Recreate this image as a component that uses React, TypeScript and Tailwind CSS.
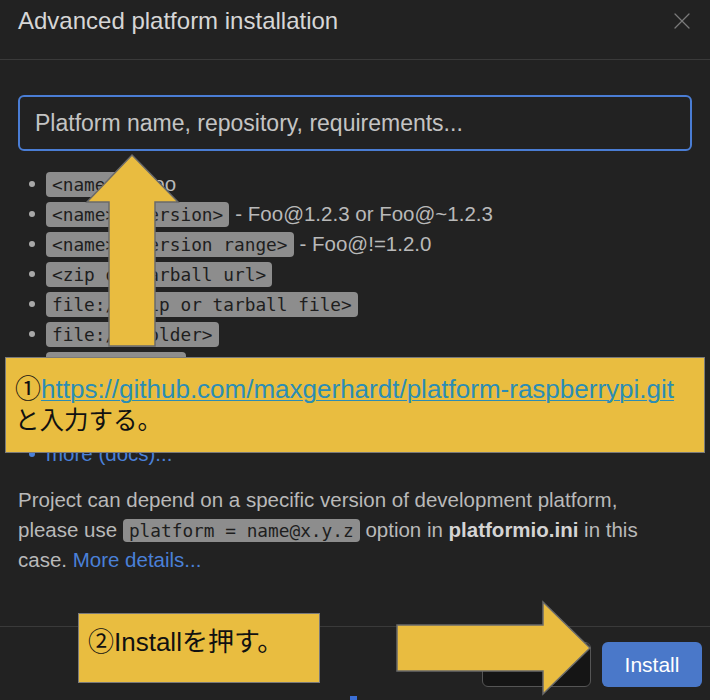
import { X } from "lucide-react";

const items: { code: string; note?: string }[] = [
  { code: "<name>", note: "Foo" },
  { code: "<name>@<version>", note: "Foo@1.2.3 or Foo@~1.2.3" },
  { code: "<name>@<version range>", note: "Foo@!=1.2.0" },
  { code: "<zip or tarball url>" },
  { code: "file://<zip or tarball file>" },
  { code: "file://<folder>" },
  { code: "<repository>" },
  { code: "<name>=<repository>", note: "name it should have locally" },
  { code: "<repository#tag>", note: "\"tag\" can be commit, branch or tag" },
];

const chip =
  "rounded-[4px] bg-[#8d8d8d] px-[6px] py-[1px] font-['DejaVu_Sans_Mono','Liberation_Mono',monospace] text-[17.8px] leading-[23px] text-[#1e1e1e]";

function Annotations() {
  return (
    <>
      <svg className="pointer-events-none absolute left-0 top-0" width="710" height="700" viewBox="0 0 710 700">
        <polygon
          points="132,155 178,202 155,202 155,346 109,346 109,202 87,202"
          fill="#e9bc40"
          stroke="#6a6a6a"
          strokeWidth="1.5"
        />
        <polygon
          points="397,625 543,625 543,602 590,648 543,694 543,671 397,671"
          fill="#e9bc40"
          stroke="#6a6a6a"
          strokeWidth="1.5"
        />
      </svg>

      <div className="absolute left-[5px] top-[357px] h-[96px] w-[700px] border border-[#7a7a7a] bg-[#e9bd40] pl-[9px] pt-[15px] font-['Liberation_Sans','Noto_Sans_CJK_JP',sans-serif] leading-[32px] text-[#111]">
        <div className="whitespace-nowrap text-[26px]">
          ①<span className="text-[#2b8db5] underline decoration-1 underline-offset-2">
            https://github.com/maxgerhardt/platform-raspberrypi.git
          </span>
        </div>
        <div className="text-[24.5px]">と入力する。</div>
      </div>

      <div className="absolute left-[78px] top-[613px] h-[70px] w-[242px] border border-[#7a7a7a] bg-[#e9bd40] pl-[9px] pt-[12px] font-['Liberation_Sans','Noto_Sans_CJK_JP',sans-serif] text-[26px] leading-[32px] text-[#111]">
        ②Installを押す。
      </div>

      <div className="absolute left-[350px] top-[696px] h-[4px] w-[7px] bg-[#3b6fd6]" />
    </>
  );
}

export default function App() {
  return (
    <div className="relative flex h-[700px] w-[710px] flex-col overflow-hidden bg-[#222222] font-['Liberation_Sans',sans-serif]">
      <header className="flex h-[60px] shrink-0 items-start justify-between border-b border-[#3a3a3a] px-[18px] pt-[7px]">
        <h1 className="text-[24px] leading-[28px] text-[#d6d6d6]">Advanced platform installation</h1>
        <X className="mr-[-4px] mt-[0px] h-[28px] w-[28px] text-[#7a7a7a]" strokeWidth={1.1} />
      </header>

      <main className="flex-1 px-[18px] pt-[35px]">
        <div className="flex h-[56px] items-center rounded-[6px] border-2 border-[#4a7dd4] px-[15px] text-[23px] text-[#c4c4c4]">
          Platform name, repository, requirements...
        </div>

        <ul className="mt-[18px]">
          {items.map((it) => (
            <li key={it.code} className="flex h-[30px] items-center whitespace-nowrap text-[20.5px] text-[#b9b9b9]">
              <span className="ml-[11px] mr-[11px] h-[6px] w-[6px] shrink-0 rounded-full bg-[#a8a8a8]" />
              <span className={chip}>{it.code}</span>
              {it.note && <span className="ml-[6px]">- {it.note}</span>}
            </li>
          ))}
          <li className="flex h-[30px] items-center text-[20.5px]">
            <span className="ml-[11px] mr-[11px] h-[6px] w-[6px] rounded-full bg-[#4a80d8]" />
            <span className="text-[#4a80d8]">more (docs)...</span>
          </li>
        </ul>

        <p className="mt-[16px] w-[650px] text-[20.5px] leading-[30px] text-[#b9b9b9]">
          Project can depend on a specific version of development platform, please use{" "}
          <span className={chip}>platform = name@x.y.z</span> option in{" "}
          <b className="text-[#d4d4d4]">platformio.ini</b> in this case.{" "}
          <span className="text-[#4a80d8]">More details...</span>
        </p>
      </main>

      <footer className="flex h-[74px] shrink-0 items-start justify-end gap-[11px] border-t border-[#3a3a3a] pr-[8px] pt-[15px]">
        <button className="flex h-[45px] w-[109px] items-start justify-center rounded-[6px] border border-[#555] bg-[#151515] pt-[6px] text-[18px] leading-[20px] text-[#ddd]">
          Cancel
        </button>
        <button className="h-[45px] w-[100px] rounded-[6px] bg-[#4a78c9] text-[21px] text-white">Install</button>
      </footer>

      <Annotations />
    </div>
  );
}
